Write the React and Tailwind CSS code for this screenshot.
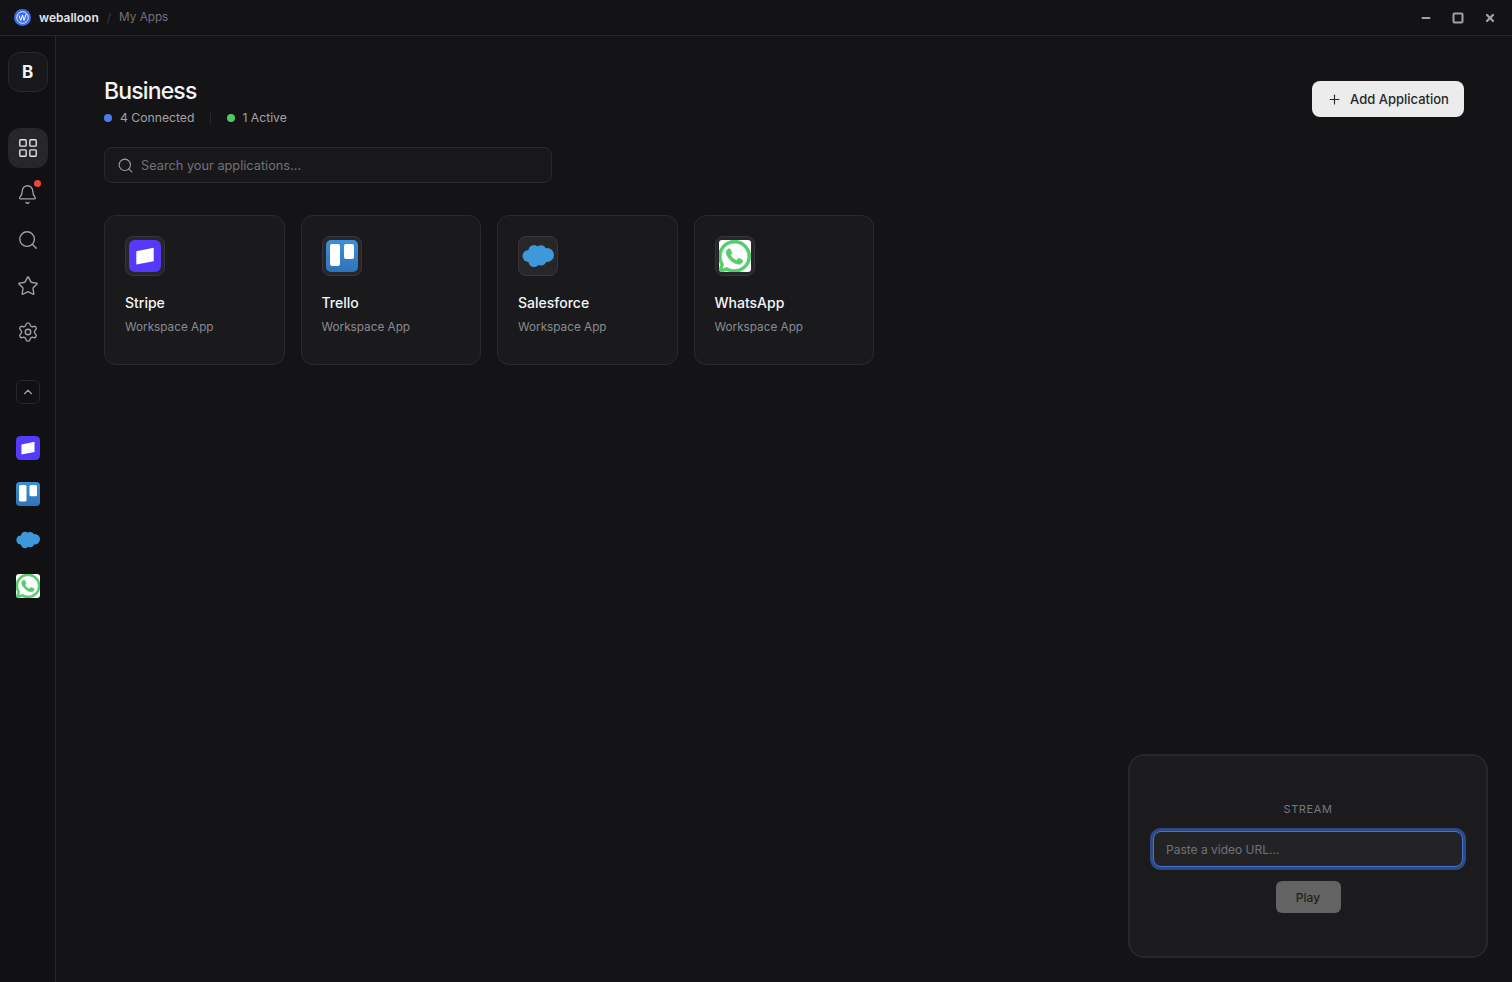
import { LayoutGrid, Bell, Search, Star, Settings, ChevronUp, Plus, Minus, Square, X } from 'lucide-react';
import { FaWhatsapp } from 'react-icons/fa';

function StripeLogo({ size }) {
  return (
    <svg width={size} height={size} viewBox="0 0 32 32">
      <rect width="32" height="32" rx="6" fill="#533afd" />
      <path d="M7.3 11.2 L24.7 7.8 V21.2 L7.3 24.5 Z" fill="#fff" />
    </svg>
  );
}

function TrelloLogo({ size }) {
  return (
    <svg width={size} height={size} viewBox="0 0 32 32">
      <defs>
        <linearGradient id="trello" x1="0" y1="0" x2="0" y2="1">
          <stop offset="0" stopColor="#3d8fd6" />
          <stop offset="1" stopColor="#2f74b8" />
        </linearGradient>
      </defs>
      <rect width="32" height="32" rx="5" fill="url(#trello)" />
      <rect x="4" y="4" width="10" height="22" rx="2" fill="#fff" />
      <rect x="18" y="4" width="10" height="15" rx="2" fill="#fff" />
    </svg>
  );
}

function SalesforceLogo({ size }) {
  return (
    <svg width={size} height={size} viewBox="0 0 32 32">
      <g fill="#3f98da">
        <circle cx="6.5" cy="16" r="6" />
        <circle cx="12" cy="10.5" r="5.5" />
        <circle cx="19" cy="10" r="4.8" />
        <circle cx="25" cy="15" r="7" />
        <circle cx="12" cy="21.5" r="5.5" />
        <circle cx="19" cy="20" r="5.5" />
        <rect x="8" y="11" width="17" height="10" />
      </g>
    </svg>
  );
}

function WhatsappLogo({ size }) {
  return (
    <div className="flex items-center justify-center bg-white rounded-[3px] overflow-hidden" style={{ width: size, height: size }}>
      <FaWhatsapp size={Math.round(size * 1.15)} color="#55cd6c" stroke="#55cd6c" strokeWidth={12} className="shrink-0" />
    </div>
  );
}

const apps = [
  { name: 'Stripe', Logo: StripeLogo },
  { name: 'Trello', Logo: TrelloLogo },
  { name: 'Salesforce', Logo: SalesforceLogo },
  { name: 'WhatsApp', Logo: WhatsappLogo },
];

export default function App() {
  return (
    <div className="relative h-[982px] w-[1512px] overflow-hidden flex flex-col bg-[#141417] font-['Inter',sans-serif]">
      {/* Titlebar */}
      <div className="h-9 shrink-0 flex items-center border-b border-[#27272a] bg-[#131316] pl-[14px] pr-4">
        <svg width="17" height="17" viewBox="0 0 17 17">
          <circle cx="8.5" cy="8.5" r="8.5" fill="#3f6ee8" />
          <circle cx="8.5" cy="8.5" r="5.8" fill="none" stroke="#e3ebff" strokeWidth="1" />
          <path d="M5 6.5 L6.8 11.5 L8.5 6 L10 11.5 L12.2 5" fill="none" stroke="#fff" strokeWidth="1" />
        </svg>
        <span className="ml-2 text-xs font-semibold text-[#e4e4e7]">weballoon</span>
        <span className="ml-2 text-xs text-[#3a3a3e]">/</span>
        <span className="ml-2 pt-px text-[11.75px] text-[#71717a]">My Apps</span>
        <div className="ml-auto flex items-center gap-5 text-[#a1a1aa]">
          <Minus size={12} strokeWidth={4} />
          <Square size={12} strokeWidth={4} />
          <X size={12} strokeWidth={4.5} />
        </div>
      </div>

      <div className="flex flex-1 min-h-0">
        {/* Sidebar */}
        <aside className="w-14 shrink-0 flex flex-col items-center pt-4 border-r border-[#27272a] bg-[#111114]">
          <div className="w-10 h-10 flex items-center justify-center pt-px rounded-xl border border-[#2a2a2d] bg-[#18181b] text-[17px] font-bold text-[#f4f4f5]">B</div>
          <nav className="mt-9 flex flex-col gap-1.5 text-[#a1a1aa]">
            <button className="w-10 h-10 flex items-center justify-center rounded-xl bg-[#27272a] text-[#e4e4e7]"><LayoutGrid size={22} strokeWidth={1.5} /></button>
            <button className="relative w-10 h-10 flex items-center justify-center">
              <Bell size={21} strokeWidth={1.5} />
              <span className="absolute top-[6px] right-[7px] w-[7px] h-[7px] rounded-full bg-[#ef4444]"></span>
            </button>
            <button className="w-10 h-10 flex items-center justify-center"><Search size={22} strokeWidth={1.5} /></button>
            <button className="w-10 h-10 flex items-center justify-center"><Star size={22} strokeWidth={1.5} /></button>
            <button className="w-10 h-10 flex items-center justify-center"><Settings size={22} strokeWidth={1.5} /></button>
          </nav>
          <button className="mt-7 w-6 h-6 flex items-center justify-center rounded-md border border-[#27272a] text-[#a1a1aa]"><ChevronUp size={14} strokeWidth={2} /></button>
          <div className="mt-6 flex flex-col gap-1.5">
            {apps.map(({ name, Logo }) => (
              <div key={name} className="w-10 h-10 flex items-center justify-center"><Logo size={24} /></div>
            ))}
          </div>
        </aside>

        {/* Content */}
        <main className="flex-1 min-w-0 pt-10 pl-12 pr-12">
          <div className="flex items-start justify-between mb-5">
            <div>
              <h1 className="text-[23px] leading-[30px] font-medium tracking-[-0.85px] text-[#f4f4f5]">Business</h1>
              <div className="mt-[3px] flex items-center text-[12.2px] leading-[18px] text-[#a1a1aa]">
                <span className="w-2 h-2 rounded-full bg-[#4b7bec]"></span>
                <span className="ml-2">4 Connected</span>
                <span className="mx-4 w-px h-3 bg-[#27272a]"></span>
                <span className="w-2 h-2 rounded-full bg-[#4fc764]"></span>
                <span className="ml-[7px]">1 Active</span>
              </div>
            </div>
            <button className="mt-[5px] h-9 w-[152px] flex items-center justify-center gap-2 pt-px rounded-lg bg-[#ececec] text-[13px] font-medium text-[#27272a]">
              <Plus size={15} strokeWidth={1.75} />
              Add Application
            </button>
          </div>

          <div className="w-[448px] h-9 flex items-center gap-[7px] px-3 rounded-lg border border-[#2a2a2d] bg-[#18181b]">
            <Search size={17} strokeWidth={1.5} className="text-[#a1a1aa]" />
            <span className="pt-px text-[12.75px] text-[#71717a]">Search your applications...</span>
          </div>

          <div className="mt-8 flex gap-4">
            {apps.map(({ name, Logo }) => (
              <div key={name} className="w-[180.5px] h-[150px] p-5 rounded-xl border border-[#2a2a2d] bg-[#1a1a1d]">
                <div className="w-10 h-10 flex items-center justify-center rounded-lg border border-[#36363a] bg-[#27272a]"><Logo size={32} /></div>
                <p className="mt-[17px] text-sm leading-5 font-[450] text-[#f4f4f5]">{name}</p>
                <p className="mt-[5px] text-[11.75px] leading-[18px] text-[#8a8a92]">Workspace App</p>
              </div>
            ))}
          </div>
        </main>
      </div>

      {/* Stream panel */}
      <div className="absolute right-6 bottom-6 w-[360px] h-[204px] flex flex-col items-center pt-[45px] rounded-2xl border-2 border-[#27272a] bg-[#1b1b1e]">
        <p className="text-[11px] leading-4 tracking-[0.6px] text-[#77777f]">STREAM</p>
        <div className="mt-[14px] w-[310px] h-9 flex items-center px-3 rounded-lg border border-[#4272d6] ring-[3px] ring-[#2e4a86] bg-[#232326]">
          <span className="pt-px text-xs text-[#71717a]">Paste a video URL...</span>
        </div>
        <button className="mt-[14px] w-[65px] h-8 pt-px rounded-md bg-[#636363] text-xs font-medium text-[#1f1f22]">Play</button>
      </div>
    </div>
  );
}
